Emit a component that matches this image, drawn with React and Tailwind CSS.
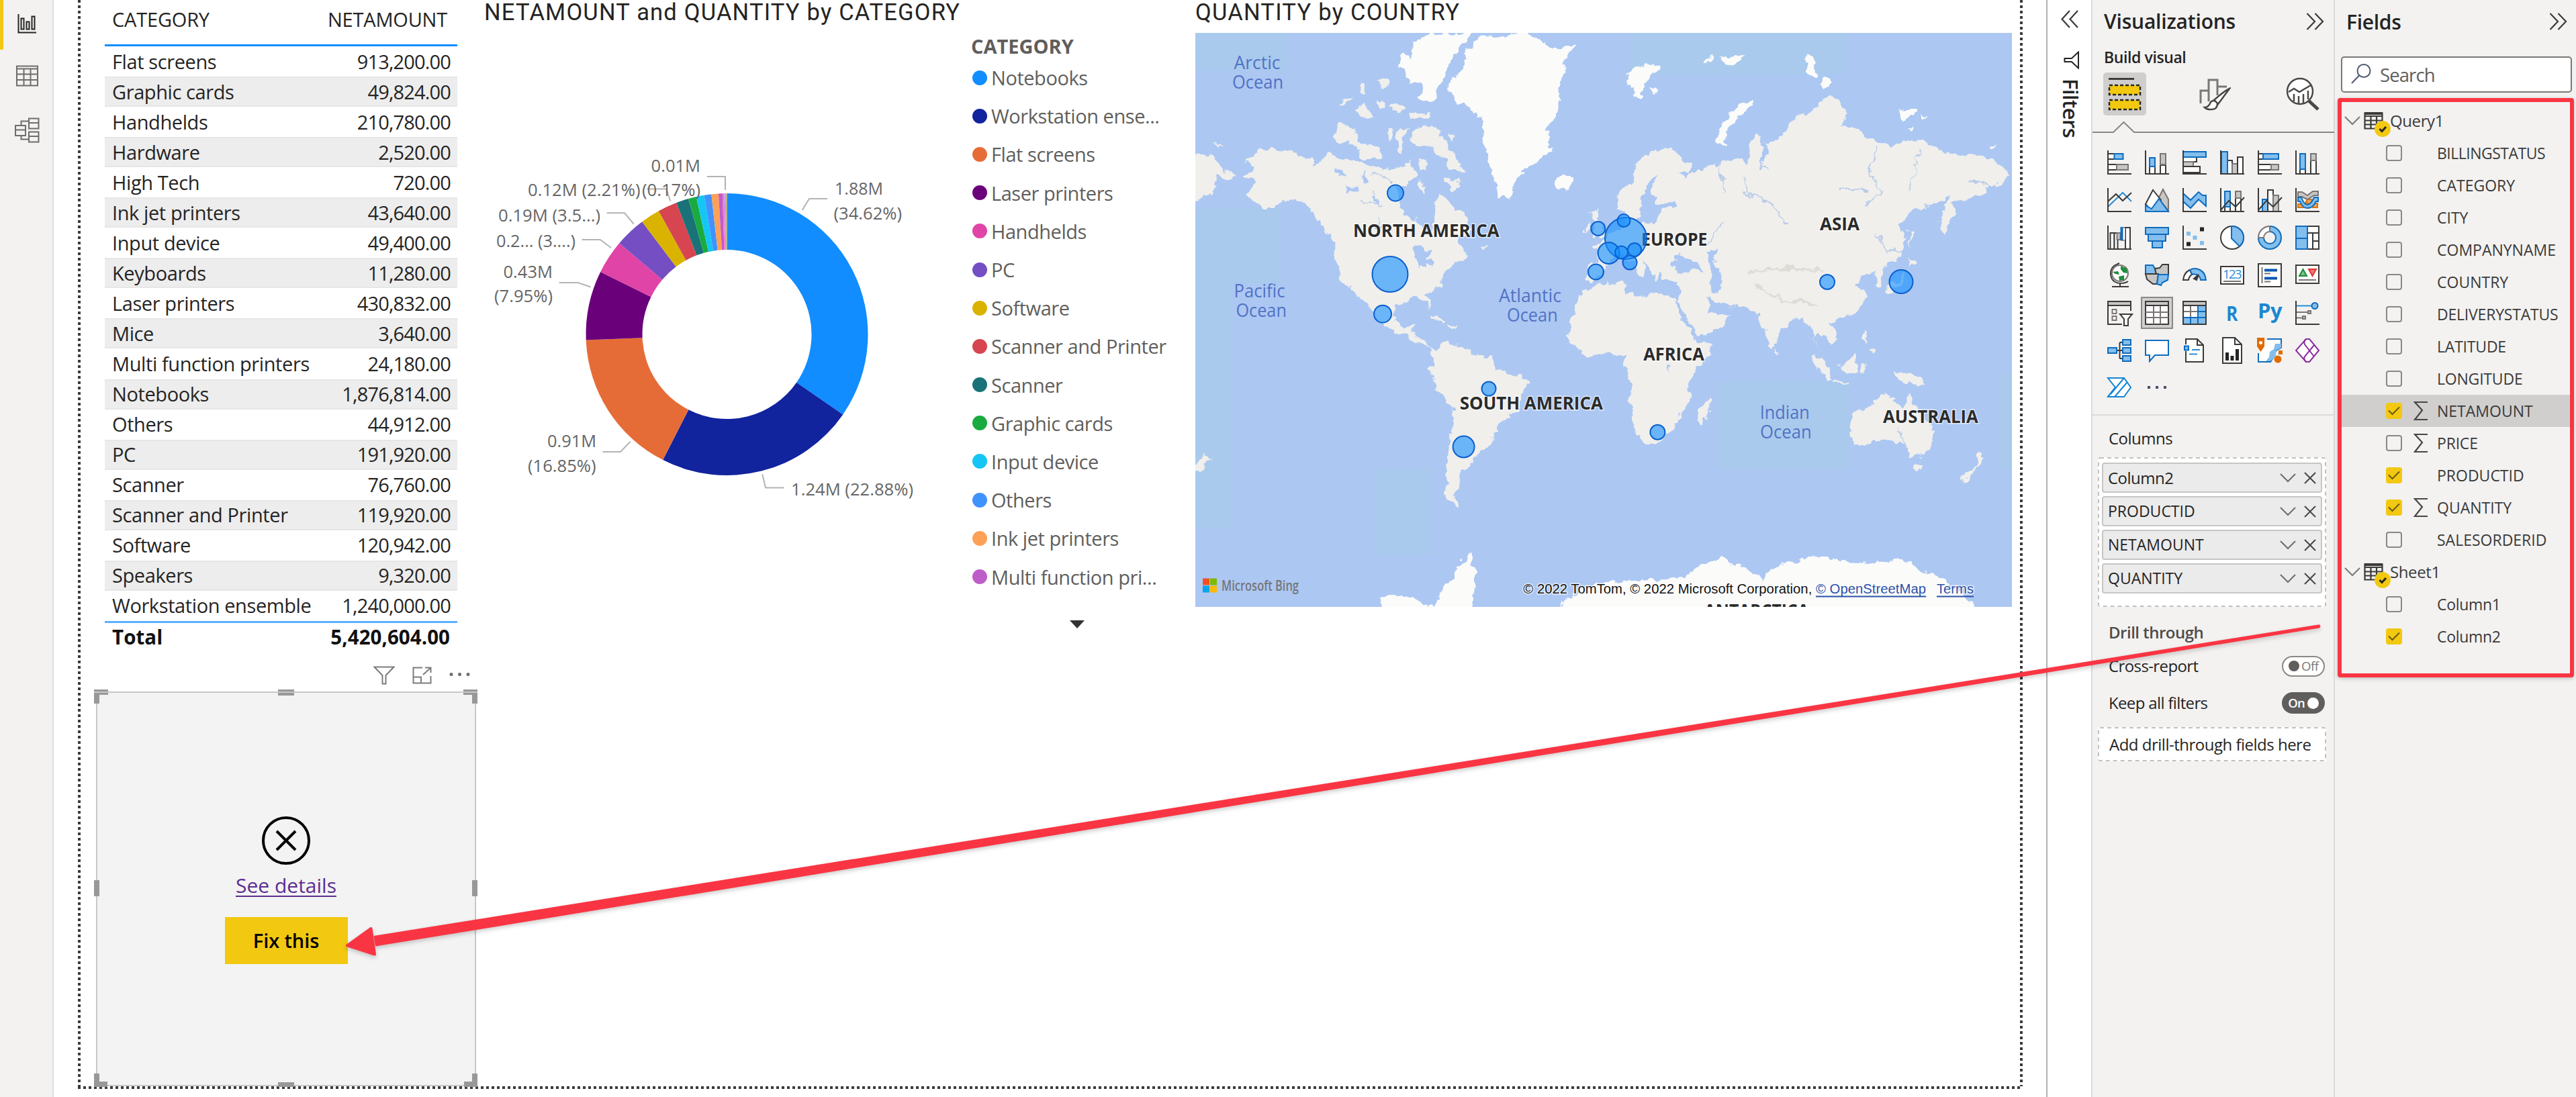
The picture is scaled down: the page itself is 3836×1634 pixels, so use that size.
import React from "react";

const D = "#3b3a39";
const B = "#0f6cbd";
const BF = "#83beec";
const G = "#7a7574";
const GF = "#c8c6c4";

const tableRows = [
  ["Flat screens", "913,200.00"],
  ["Graphic cards", "49,824.00"],
  ["Handhelds", "210,780.00"],
  ["Hardware", "2,520.00"],
  ["High Tech", "720.00"],
  ["Ink jet printers", "43,640.00"],
  ["Input device", "49,400.00"],
  ["Keyboards", "11,280.00"],
  ["Laser printers", "430,832.00"],
  ["Mice", "3,640.00"],
  ["Multi function printers", "24,180.00"],
  ["Notebooks", "1,876,814.00"],
  ["Others", "44,912.00"],
  ["PC", "191,920.00"],
  ["Scanner", "76,760.00"],
  ["Scanner and Printer", "119,920.00"],
  ["Software", "120,942.00"],
  ["Speakers", "9,320.00"],
  ["Workstation ensemble", "1,240,000.00"],
];

/* ---------- left rail ---------- */
function Rail() {
  return (
    <div className="flex w-[80px] shrink-0 flex-col border-r-2 border-[#e1dfdd] bg-[#f3f2f1]">
      <div className="flex h-[74px] items-start border-l-[5px] border-[#f2c811] pt-[20px] pl-[21px]">
        <svg width="29" height="30" viewBox="0 0 29 30" fill="none" stroke="#252423" strokeWidth="2">
          <path d="M1.500 1V28.500H28" />
          <path d="M5.500 7.500h4v16h-4zM13.500 12.500h4v11h-4zM21.500 4.500h4v19h-4z" />
        </svg>
      </div>
      <div className="pt-[23px] pl-[24px]">
        <svg width="33" height="32" viewBox="0 0 33 32" fill="none" stroke="#6f6d6b" strokeWidth="2">
          <path d="M1 1.500H32V30.500H1zM1 5.500H32M1 13.500H32M1 22H32M11.500 5.500V30.500M21.500 5.500V30.500" />
        </svg>
      </div>
      <div className="pt-[46px] pl-[22px]">
        <svg width="37" height="38" viewBox="0 0 37 38" fill="none" stroke="#6f6d6b" strokeWidth="2">
          <path d="M1 12H16V27H1zM1 18.500H16M21 1.500H35.500V16.500H21zM21 8H35.500M21 21.500H35.500V36.500H21zM21 28H35.500M9.500 12V5.500H21M9.500 27V32.500H21" />
        </svg>
      </div>
    </div>
  );
}

const DotsV = () => (
  <div className="w-1 shrink-0 bg-[repeating-linear-gradient(180deg,#3a3a3a_0px,#3a3a3a_4px,transparent_4px,transparent_8px)]" />
);

/* ---------- table visual ---------- */
function TableVisual() {
  return (
    <div className="ml-[36px] w-[525px] text-[29px] tracking-[-0.4px] text-[#252423]">
      <div className="flex h-[69px] items-start justify-between border-b-[3px] border-[#118dff] pt-[8px] pr-[15px] pl-[11px] leading-[42px] tracking-[-0.2px]">
        <span>CATEGORY</span>
        <span>NETAMOUNT</span>
      </div>
      {tableRows.map(([n, v], i) => (
        <div
          key={n}
          className={
            "flex h-[45.06px] items-center justify-between pr-[10px] pl-[11px] leading-[40px] " +
            (i % 2 ? "border-y-2 border-[#e6e6e6] bg-[#ededed]" : "")
          }
        >
          <span>{n}</span>
          <span className="tracking-[-0.85px]">{v}</span>
        </div>
      ))}
      <div className="flex h-[50px] items-center justify-between border-t-[3px] border-[#5ab0ff] pr-[11px] pb-[4px] pl-[11px] text-[29.500px] font-bold tracking-[0.05px] text-[#111]">
        <span>Total</span>
        <span>5,420,604.00</span>
      </div>
    </div>
  );
}

/* ---------- selected broken visual ---------- */
function ErrorVisual() {
  return (
    <div className="ml-[23px] w-[566px]">
      <div className="mt-[17px] flex h-[31px] items-start justify-end gap-[26px] pr-[9px]">
        <svg width="32" height="28" viewBox="0 0 32 28" fill="none" stroke="#7f7d7b" strokeWidth="2">
          <path d="M1.500 1.500H30.500L18.500 14V26.500H13.500V14z" />
        </svg>
        <svg width="29" height="26" viewBox="0 0 29 26" fill="none" stroke="#7f7d7b" strokeWidth="2" className="mt-px">
          <path d="M15 1.500H1.500V24.500H27.500V14M1.500 15.500H13V24.500M19 1.500H27.500V9M16 12L27 2" />
        </svg>
        <svg width="31" height="26" viewBox="0 0 31 26" fill="#6f6d6b">
          <circle cx="3" cy="12.500" r="2.500" />
          <circle cx="15.500" cy="12.500" r="2.500" />
          <circle cx="28" cy="12.500" r="2.500" />
        </svg>
      </div>
      <div className="relative mt-[7px] flex h-[588px] flex-col items-center border-2 border-[#c8c8c8] bg-[#f3f3f3]">
        <svg className="mt-[183px]" width="74" height="74" viewBox="0 0 74 74" fill="none" stroke="#000">
          <circle cx="37" cy="37" r="34" strokeWidth="4" />
          <path d="M23 23L51 51M51 23L23 51" strokeWidth="4" />
        </svg>
        <span className="mt-[9px] text-[30px] leading-[42px] text-[#5c2d91] underline decoration-2 underline-offset-[4px]">
          See details
        </span>
        <div className="mt-[26px] flex h-[70px] w-[183px] items-center justify-center bg-[#f2c811] text-[29px] font-semibold tracking-[-0.1px] text-black">
          Fix this
        </div>
        <svg className="absolute -top-[5px] -left-[5px]" width="572" height="592" viewBox="0 0 572 592" fill="#989898">
          <path d="M0 0H21V8H8V21H0zM571 0H550V8H563V21H571zM0 592V572H8V584H20V592zM571 592V572H563V584H551V592z" />
          <path d="M274 0H298V9H274zM274 585H298V592H274zM0 284H8V308H0zM563 284H571V308H563z" />
          <path d="M0 4H21M274 4H298M550 4H571" stroke="#c6c6c6" strokeWidth="2" />
        </svg>
      </div>
    </div>
  );
}

/* ---------- donut visual ---------- */
const slices = [
  [1876814, "#118DFF"],
  [1240000, "#12239E"],
  [913200, "#E66C37"],
  [430832, "#6B007B"],
  [210780, "#E044A7"],
  [191920, "#744EC2"],
  [120942, "#D9B300"],
  [119920, "#D64550"],
  [76760, "#197278"],
  [49824, "#1AAB40"],
  [49400, "#15C6F4"],
  [44912, "#4092FF"],
  [43640, "#FFA058"],
  [24180, "#BE5DC9"],
  [11280, "#F472D0"],
  [9320, "#B5A1FF"],
  [3640, "#C4A200"],
  [2520, "#FF8080"],
  [720, "#00DBBC"],
];
const sliceTotal = slices.reduce((a, s) => a + s[0], 0);

function Donut() {
  const cx = 362.5;
  const cy = 466;
  const R = 210;
  const r = 126;
  let acc = 0;
  const paths = slices.map(([v, c]) => {
    const a0 = (acc / sliceTotal) * Math.PI * 2;
    acc += v;
    const a1 = (acc / sliceTotal) * Math.PI * 2;
    const p = (a, q) => `${(cx + q * Math.sin(a)).toFixed(2)} ${(cy - q * Math.cos(a)).toFixed(2)}`;
    return (
      <path key={c} fill={c} d={`M${p(a0, R)}A${R} ${R} 0 0 1 ${p(a1, R)}L${p(a1, r)}A${r} ${r} 0 0 0 ${p(a0, r)}Z`} />
    );
  });
  const labels = [
    [523, 258, 72, "1.88M"],
    [521.5, 294.5, 101.5, "(34.62%)"],
    [458, 706, 182, "1.24M (22.88%)"],
    [95, 634, 73, "0.91M"],
    [66, 670.5, 101.5, "(16.85%)"],
    [29.5, 381.5, 73.5, "0.43M"],
    [16, 418, 87, "(7.95%)"],
    [19, 336, 118, "0.2... (3....)"],
    [22, 298, 152, "0.19M (3.5...)"],
    [66, 260, 167.5, "0.12M (2.21%)"],
    [249.6, 223.6, 73.4, "0.01M"],
    [236, 260, 87, "(0.17%)"],
  ];
  return (
    <svg width="700" height="760" viewBox="0 0 700 760" className="shrink-0">
      {paths}
      <path
        fill="none"
        stroke="#b3b3b3"
        strokeWidth="2"
        d="M474.600 281L485 264H512M332.700 231H360V251M243.400 249.500H272.400L278.200 267.500M183.600 285.300H210L223.800 301.700M146.500 325H173.800L189.800 337M112.600 389H140.700L159.500 395.500M177.300 641H204L218.400 626M415.300 674.600L420 694.500H447.400"
      />
      {labels.map(([x, y, w, t]) => (
        <text key={t} x={x} y={y} textLength={w} lengthAdjust="spacingAndGlyphs" fontSize="26" fill="#666">
          {t}
        </text>
      ))}
    </svg>
  );
}

const legend = [
  ["Notebooks", "bg-[#118DFF]"],
  ["Workstation ense...", "bg-[#12239E]"],
  ["Flat screens", "bg-[#E66C37]"],
  ["Laser printers", "bg-[#6B007B]"],
  ["Handhelds", "bg-[#E044A7]"],
  ["PC", "bg-[#744EC2]"],
  ["Software", "bg-[#D9B300]"],
  ["Scanner and Printer", "bg-[#D64550]"],
  ["Scanner", "bg-[#197278]"],
  ["Graphic cards", "bg-[#1AAB40]"],
  ["Input device", "bg-[#15C6F4]"],
  ["Others", "bg-[#4092FF]"],
  ["Ink jet printers", "bg-[#FFA058]"],
  ["Multi function pri...", "bg-[#BE5DC9]"],
];

function DonutVisual() {
  return (
    <div className="flex w-[1060px] shrink-0 flex-col">
      <h2 className="h-[32px] pl-px font-['Roboto'] text-[34.5px] leading-[36px] tracking-[1.2px] whitespace-nowrap text-[#252423]">
        NETAMOUNT and QUANTITY by CATEGORY
      </h2>
      <div className="flex">
        <Donut />
        <div className="flex flex-col pt-[18px] pl-[26px] text-[29px] whitespace-nowrap text-[#605e5c]">
          <div className="h-[37px] leading-[38px] font-bold">CATEGORY</div>
          {legend.map(([n, c]) => (
            <div key={n} className="flex h-[57.2px] items-center gap-[6px] pl-[2px] leading-[57px] tracking-[-0.45px]">
              <span className={"size-[22px] rounded-full " + c} />
              <span>{n}</span>
            </div>
          ))}
          <svg className="mt-[36px] ml-[147px]" width="22" height="12" viewBox="0 0 22 12">
            <path d="M0 0H22L11 12z" fill="#333" />
          </svg>
        </div>
      </div>
    </div>
  );
}

/* ---------- map visual ---------- */
const americas = [
  "M230 410L290 375 370 380 440 395 480 415 530 390 580 405 650 410 690 425 760 430 820 410 845 445 800 470 770 480 785 520 800 545 850 565 880 600 905 590 900 550 915 495 950 500 980 535 1010 530 1030 560 1045 580 1020 600 990 600 1000 625 1035 650 985 665 965 680 940 700 920 730 880 750 893 785 870 760 820 755 770 775 755 800 770 815 800 835 835 820 825 845 865 860 890 885 850 870 800 850 740 840 690 800 660 770 620 740 570 710 555 680 550 620 530 600 490 560 450 520 400 505 350 515 330 530 290 530 265 515 230 500 270 465 225 450 265 425Z",
  "M890 885L915 890 950 870 1010 880 1060 900 1110 910 1125 940 1190 950 1245 970 1220 1005 1205 1045 1150 1070 1120 1110 1090 1135 1070 1150 1040 1160 1030 1185 1000 1200 995 1240 975 1265 1000 1290 975 1285 950 1265 948 1210 960 1130 975 1040 945 1015 915 985 888 945 905 910Z",
  "M40 390L110 395 150 430 195 445 180 460 130 445 110 490 70 500 40 520Z",
  "M545 350L570 310 620 330 640 365 700 370 720 400 650 403 610 365 570 360Z",
  "M825 330L900 318 950 360 1000 420 1025 435 960 425 930 400 880 372 830 370Z",
  "M565 268L600 242 620 248 590 268ZM610 275L660 262 690 298 640 300ZM640 215L665 212 660 238 640 235ZM700 200L745 205 735 222 712 218ZM735 325L755 320 760 350 740 355ZM768 330L810 318 800 345 790 395 770 385 775 355ZM815 285L895 285 890 300 820 305ZM700 250L730 262 728 282 705 270ZM740 265L800 268 770 292ZM945 450L990 455 998 480 960 480ZM850 398L880 410 878 430 855 430ZM850 460L878 470 860 500 845 480ZM955 338L985 345 970 355Z",
  "M900 800L940 812 935 818 895 806ZM950 822L990 825 985 830 950 828ZM1065 622L1095 622 1080 632ZM110 365L145 366 125 373Z",
  "M1465 580L1440 600 1445 580 1465 570ZM1470 540L1490 532 1500 560 1530 600 1480 605 1485 575Z",
  "M40 1190L80 1155 105 1160 70 1190 50 1215Z",
];
const snowWest = [
  "M955 215L1010 180 1030 120 1080 90 1160 95 1210 82 1290 100 1340 125 1420 110 1380 150 1360 200 1350 280 1310 340 1335 380 1260 420 1200 450 1180 500 1140 500 1120 440 1090 370 1080 310 1040 270 985 265Z",
  "M830 110L900 83 1045 83 980 140 930 200 900 260 850 250 870 215 820 210 780 170 790 135 825 150Z",
  "M1340 465L1370 445 1405 455 1385 478 1355 480Z",
  "M715 1525L740 1510 860 1525 900 1540 940 1490 990 1440 1040 1400 1050 1460 1045 1550 715 1550Z",
];
const eurasia = [
  "M-103 830L-85 790 -54 740 5 722 95 715 100 745 170 755 180 740 270 755 290 790 320 830 345 865 405 870 385 905 340 945 320 970 325 1020 290 1045 280 1075 240 1110 200 1130 165 1130 140 1095 125 1050 108 1025 122 975 95 935 90 905 44 895 -44 905 -74 890 -108 855Z",
  "M60 500L80 480 120 470 140 410 190 385 250 378 330 420 320 440 280 438 300 455 350 430 410 420 480 400 530 420 538 360 565 338 575 370 575 420 600 400 590 362 640 350 690 300 760 280 800 255 820 240 880 285 860 320 920 330 990 360 1040 375 1100 350 1190 370 1240 390 1300 395 1390 400 1440 430 1460 445 1430 460 1380 470 1380 490 1300 510 1255 510 1260 540 1230 590 1215 600 1205 560 1230 530 1240 500 1190 520 1120 530 1060 570 1090 600 1070 650 1010 680 1000 730 980 725 975 690 930 700 915 720 945 750 920 790 860 810 820 820 850 855 830 875 780 845 765 855 790 900 755 840 720 800 680 810 640 850 615 885 600 860 570 800 520 780 440 770 400 760 378 750 400 792 470 800 430 835 350 858 320 810 280 765 290 740 285 715 230 708 215 690 205 712 170 670 155 655 165 690 150 700 120 665 100 652 60 650 30 668 0 700 -20 715 -50 710 -45 670 0 665 -5 640 -20 630 20 610 50 590 90 580 100 545 85 535 65 530Z",
  "M355 1040L395 1005 400 1020 375 1075 355 1070Z",
  "M890 1080L900 1050 960 1030 1000 1005 1050 1005 1045 1020 1080 1035 1100 1000 1115 1020 1150 1050 1185 1095 1180 1130 1145 1160 1100 1155 1080 1125 1040 1115 980 1120 905 1135 900 1110Z",
  "M1120 1178L1148 1180 1135 1195ZM1350 1150L1370 1160 1320 1200 1300 1222 1290 1210 1335 1180Z",
  "M755 900L795 905 825 960 805 958 770 925ZM850 930L915 900 912 940 885 950 855 940ZM830 965L880 970 878 976 832 971ZM930 925L950 928 940 950 925 945ZM1040 945L1100 945 1140 965 1158 985 1100 972 1080 965ZM935 835L948 838 950 868 938 860ZM955 880L985 885 972 895ZM1098 585L1112 590 1105 630ZM1095 655L1130 665 1102 680ZM1080 690L1080 720 1020 742 1015 732 1065 715ZM980 700L1000 712 990 730ZM628 880L640 890 632 898Z",
];
const snowEast = [
  "M100 190L160 165 220 165 218 182 180 195 160 215 150 252 130 245 110 210ZM180 225L205 230 195 240ZM440 148L480 140 515 138 500 155 450 160ZM375 155L400 145 395 160ZM725 150L735 135 760 140 765 165 780 185 770 200 740 180ZM780 212L800 195 820 210 800 225Z",
  "M420 365L435 315 480 275 540 253 545 265 485 298 455 340 447 375Z",
  "M1065 278L1115 280 1112 298 1070 298ZM1140 288L1168 295 1150 300ZM1095 322L1112 325 1102 332ZM1380 368L1408 366 1395 374Z",
  "M-145 1550L-95 1510 0 1480 90 1475 250 1470 300 1465 350 1440 430 1415 470 1430 540 1445 580 1470 640 1435 700 1425 760 1410 860 1420 960 1430 1040 1418 1100 1430 1150 1450 1220 1470 1290 1505 1335 1550Z",
];

const bubbles = [
  [2078, 287.5, 12],
  [2070, 408.5, 26.5],
  [2059, 467.7, 13],
  [2217, 579, 10.5],
  [2179.6, 665.5, 16],
  [2379.8, 340.4, 10.5],
  [2421, 355, 31],
  [2395.6, 377, 16],
  [2376.5, 405, 11.5],
  [2418, 328.6, 9.5],
  [2414.5, 376, 9.5],
  [2434, 372, 10],
  [2427, 391, 10.5],
  [2721, 420, 11],
  [2831, 419.6, 17.5],
  [2468.4, 643.8, 11],
];
const continents = [
  [2015, 352.7, 217.6, "NORTH AMERICA"],
  [2444, 365.6, 98.5, "EUROPE"],
  [2710, 343.3, 59, "ASIA"],
  [2447.3, 537, 90.5, "AFRICA"],
  [2173.8, 609.7, 213, "SOUTH AMERICA"],
  [2803.9, 629.7, 142, "AUSTRALIA"],
  [2537.8, 919, 156, "ANTARCTICA"],
];
const oceans = [
  [1837.5, 102.7, 69, "Arctic"],
  [1835, 132, 76, "Ocean"],
  [1837.5, 443, 76, "Pacific"],
  [1840.4, 472.4, 75.5, "Ocean"],
  [2232, 450, 93, "Atlantic"],
  [2244, 479, 75.7, "Ocean"],
  [2620.8, 623.8, 74, "Indian"],
  [2621, 653, 76.8, "Ocean"],
];

function MapVisual() {
  return (
    <div className="flex w-[1216px] shrink-0 flex-col">
      <h2 className="h-[49px] font-['Roboto'] text-[34.5px] leading-[36px] tracking-[1.25px] whitespace-nowrap text-[#252423]">
        QUANTITY by COUNTRY
      </h2>
      <svg width="1216" height="855" viewBox="1780 49 1216 855" className="overflow-hidden">
        <defs>
          <filter id="coast" x="-2%" y="-2%" width="104%" height="104%">
            <feTurbulence type="fractalNoise" baseFrequency="0.07" numOctaves="3" seed="4" />
            <feDisplacementMap in="SourceGraphic" scale="16" xChannelSelector="R" yChannelSelector="G" />
          </filter>
        </defs>
        <rect x="1780" y="49" width="1216" height="855" fill="#acc7f2" />
        <g fill="#a9caec">
          <path d="M1780 311H1907V422H1835V786H1780zM2047 698H2131V826H2047zM1780 49H1918V105H1780zM2426 49H2750V111H2426zM2557 569H2755V698H2557zM2978 557H2996V698H2978z" />
        </g>
        <g filter="url(#coast)">
          <g transform="translate(1760 0) scale(0.4146 0.5869)">
            <g fill="#f0efec">
              {americas.map((d) => (
                <path key={d} d={d} />
              ))}
            </g>
            <g fill="#fbfbfa">
              {snowWest.map((d) => (
                <path key={d} d={d} />
              ))}
            </g>
            <g fill="#acc7f2">
              <path d="M830 635L860 625 900 640 880 655 905 665 900 678 860 670 845 680ZM790 500L815 485 850 470 880 500 905 510 880 560 850 560 800 540Z" />
              <path d="M545 430L600 440 570 455ZM585 470L640 478 600 490ZM655 430L672 470 650 465ZM690 480L705 520 690 510ZM700 545L712 575 702 578Z" />
            </g>
            <path d="M640 510L720 520M680 440L760 465M1450 865L1500 840" stroke="#b9cbe8" strokeWidth="4" fill="none" />
          </g>
          <g transform="translate(2380 0) scale(0.4209 0.5869)">
            <g fill="#f0efec">
              {eurasia.map((d) => (
                <path key={d} d={d} />
              ))}
            </g>
            <g fill="#fbfbfa">
              {snowEast.map((d) => (
                <path key={d} d={d} />
              ))}
            </g>
            <g fill="#acc7f2">
              <path d="M140 560L150 520 165 480 190 448 208 450 188 490 205 518 270 512 275 525 215 538 200 560 170 575Z" />
              <path d="M262 672L285 645 300 655 345 660 380 688 330 684 270 690ZM385 640L425 630 408 665 435 700 428 748 400 740 402 690Z" />
              <path d="M240 925L262 930 255 945ZM270 765L290 770 345 865 335 860Z" />
            </g>
            <path
              d="M515 450L525 490 620 520 665 570M980 370L960 440 1010 490 940 520M850 480L960 480M1140 380L1100 490M575 420L610 425M425 420L450 490M980 590L1020 635 1080 640M440 560L390 620M1310 460L1380 465M1060 1090L1085 1140"
              stroke="#b9cbe8"
              strokeWidth="4"
              fill="none"
            />
            <path d="M530 690L700 680 800 690M550 720L640 760 780 775" stroke="#dedcd6" strokeWidth="6" fill="none" />
          </g>
        </g>
        {continents.map(([x, y, w, t]) => (
          <text
            key={t}
            x={x}
            y={y}
            textLength={w}
            lengthAdjust="spacingAndGlyphs"
            fontSize="27"
            fontWeight="700"
            fill="#2b2b2b"
            stroke="#fff"
            strokeOpacity="0.6"
            strokeWidth="3"
            paintOrder="stroke"
          >
            {t}
          </text>
        ))}
        {oceans.map(([x, y, w, t]) => (
          <text key={t + x} x={x} y={y} textLength={w} lengthAdjust="spacingAndGlyphs" fontSize="27" fill="#5272c6">
            {t}
          </text>
        ))}
        <g fill="#118dff" fillOpacity="0.6" stroke="#0a60cf" strokeWidth="2">
          {bubbles.map(([x, y, r]) => (
            <circle key={x} cx={x} cy={y} r={r} />
          ))}
        </g>
        <path fill="#f25022" d="M1791 861.500h10v10h-10z" />
        <path fill="#7fba00" d="M1802 861.500h10v10h-10z" />
        <path fill="#00a4ef" d="M1791 872.500h10v10h-10z" />
        <path fill="#ffb900" d="M1802 872.500h10v10h-10z" />
        <text x="1819" y="879.700" textLength="115" lengthAdjust="spacingAndGlyphs" fontSize="21" fontWeight="600" fill="#75777c">
          Microsoft Bing
        </text>
        <g fontFamily="Liberation Sans" fontSize="20" stroke="#fff" strokeOpacity="0.7" strokeWidth="3" paintOrder="stroke">
          <text x="2268.300" y="884.400" textLength="430" lengthAdjust="spacingAndGlyphs" fill="#111">
            © 2022 TomTom, © 2022 Microsoft Corporation,
          </text>
          <text x="2704" y="884.400" textLength="164" lengthAdjust="spacingAndGlyphs" fill="#2a52a8">
            © OpenStreetMap
          </text>
          <text x="2884" y="884.400" textLength="55" lengthAdjust="spacingAndGlyphs" fill="#2a52a8">
            Terms
          </text>
        </g>
        <path d="M2704 888.500H2868M2884 888.500H2939" stroke="#2a52a8" strokeWidth="2" />
      </svg>
    </div>
  );
}

/* ---------- filters strip ---------- */
function FiltersStrip() {
  return (
    <div className="flex w-[67px] shrink-0 flex-col items-center border-l-2 border-[#b3b0ad] bg-white pl-px">
      <svg className="mt-[15px]" width="26" height="27" viewBox="0 0 26 27" fill="none" stroke="#3b3a39" strokeWidth="2.200">
        <path d="M13 1L1.500 13.500 13 26M25 1L13.500 13.500 25 26" />
      </svg>
      <svg className="mt-[34px] ml-[6px]" width="24" height="27" viewBox="0 0 24 27" fill="none" stroke="#252423" strokeWidth="2">
        <path d="M22 1.500V25.500L12 16H1.500V11H12z" />
      </svg>
      <div className="mt-[14px] h-[90px] pl-[3px] text-[31px] leading-[32px] font-semibold tracking-[-0.6px] text-[#252423] [writing-mode:vertical-rl]">
        Filters
      </div>
    </div>
  );
}

/* ---------- visual gallery icons (36 x 36) ---------- */
const Axis = () => <path d="M1 0V35H36" stroke={D} fill="none" />;
const Rc = ({ x, y, w, h, k }) => (
  <rect
    x={x}
    y={y}
    width={w}
    height={h}
    fill={k === "b" ? BF : k === "g" ? GF : "#fff"}
    stroke={k === "b" ? B : k === "g" ? G : D}
  />
);
const gallery = [
  <><Rc x={1} y={5} w={10} h={8} /><Rc x={10.5} y={5} w={13} h={8} k="b" /><Rc x={1} y={21} w={14} h={8} /><Rc x={14} y={21} w={17} h={8} k="g" /><Axis /></>,
  <><Rc x={7} y={24} w={8} h={11} /><Rc x={7} y={11} w={8} h={13} k="b" /><Rc x={23} y={22} w={8} h={13} /><Rc x={23} y={5} w={8} h={16} k="g" /><Axis /></>,
  <><Rc x={1} y={10} w={20} h={7} /><Rc x={1} y={17} w={15} h={7} k="g" /><Rc x={1} y={24} w={25} h={9} /><Rc x={1} y={2} w={34} h={8} k="b" /><Axis /></>,
  <><Rc x={11} y={15} w={7} h={20} /><Rc x={18} y={20} w={8} h={15} k="g" /><Rc x={26} y={10} w={8} h={25} /><Rc x={2} y={2} w={9} h={33} k="b" /><Axis /></>,
  <><Rc x={1} y={5} w={8} h={8} /><Rc x={8} y={5} w={23} h={8} k="b" /><Rc x={1} y={21} w={20} h={8} /><Rc x={20} y={21} w={11} h={8} k="g" /><Axis /></>,
  <><Rc x={7} y={28} w={8} h={7} /><Rc x={7} y={5} w={8} h={23} k="b" /><Rc x={23} y={15} w={8} h={20} /><Rc x={23} y={5} w={8} h={10} k="g" /><Axis /></>,

  <><path d="M1 28L23 7 36 20" stroke="#2a8dd4" fill="none" /><path d="M1 20L13 9 23 19 36 7" stroke={D} fill="none" /><Axis /></>,
  <><path d="M19 18L27 2 35 17V34L22 18z" fill={GF} stroke={G} /><path d="M1 24L12 3 24 18 10 34z" fill="#fff" stroke={D} /><path d="M1 26L10 31 21 16 35 35H1z" fill={BF} stroke={B} /></>,
  <><path d="M1 8L12 18 24 6 30 11H35V27L24 17 12 30 1 20z" fill={BF} stroke={B} /><Axis /></>,
  <><Rc x={7} y={28} w={8} h={7} /><Rc x={7} y={5} w={8} h={23} k="b" /><Rc x={23} y={15} w={8} h={20} /><Rc x={23} y={5} w={8} h={10} k="g" /><path d="M1 33L13 19 23 28 36 14" stroke={D} fill="none" /><Axis /></>,
  <><Rc x={7} y={17} w={8} h={18} k="b" /><Rc x={15} y={3} w={8} h={32} /><Rc x={23} y={11} w={8} h={24} k="g" /><path d="M1 33L13 19 23 28 36 14" stroke={D} fill="none" /><Axis /></>,
  <><path d="M4 24H14L18 17H24L28 23H33V29H26L18 22 12 29H4z" fill="#f2a65a" stroke="#d9730d" /><path d="M4 6H10L18 11 26 5H34V11H28L18 17 10 13H4z" fill={GF} stroke={G} /><path d="M4 14H9Q13 25 18 25 23 25 28 14H34V20H31Q26 30 18 30 11 30 7 20H4z" fill={BF} stroke={B} /><Axis /></>,

  <><Rc x={4.5} y={11} w={6} h={24} /><Rc x={10.5} y={11} w={5} h={24} /><rect x="14.500" y="11" width="5" height="10" fill={GF} stroke={G} /><Rc x={27} y={3} w={7} h={32} /><path d="M22 3H27V22H20z" fill="#fff" stroke={D} strokeWidth="1" /><path d="M21.500 2V22" stroke={B} strokeWidth="4" /><Axis /></>,
  <><Rc x={1} y={3} w={34} h={10} k="b" /><Rc x={5} y={13} w={26} h={10} k="b" /><Rc x={11} y={23} w={15} h={10} k="b" /></>,
  <><g stroke="none"><path d="M26 2.500h6v6h-6zM6 24.500h6v6h-6z" fill="#252423" /><path d="M6 9h6v6h-6zM15.500 15h6v6h-6zM26 23h6v6h-6z" fill={BF} /></g><Axis /></>,
  <><circle cx="18" cy="18" r="17" fill="#fff" stroke={D} /><path d="M17 1A17 17 0 0 1 29 31L17 19z" fill={BF} stroke={B} /></>,
  <><path d="M18 1A17 17 0 1 1 1 18H9A9 9 0 1 0 18 9z" fill={BF} stroke={B} /><path d="M1 18A17 17 0 0 1 18 1V9A9 9 0 0 0 9 18z" fill="#fff" stroke={G} /></>,
  <><Rc x={1} y={1} w={34} h={34} /><path d="M18 11H35M26 11V35M26 23H35" stroke={D} fill="none" /><Rc x={1} y={1} w={17} h={18} k="b" /><Rc x={1} y={19} w={17} h={16} k="b" /></>,

  <><path d="M14 2Q5 5 5 16 6 29 19 30 27 30 31 27M19 30V35M7 35H32M14 2L18 0" stroke={D} fill="none" /><circle cx="19" cy="15" r="12" fill="#fff" stroke={G} /><path d="M20 4L29 8 30 15 24 14 20 9zM8 13L16 12 18 17 12 16zM17 20L25 18 25 25 18 26z" fill="#1f8b3b" stroke="none" /></>,
  <><path d="M1 3H12L15 8 17 16H1z" fill={BF} stroke={B} /><path d="M15 8L22 7 26 2H35V17H17z" fill={GF} stroke={D} /><path d="M1 16H20L18 31 12 31 3 24z" fill={GF} stroke={D} /><path d="M20 17H35L34 25 26 29 24 33 18 31z" fill={BF} stroke={B} /></>,
  <><path d="M1 25Q2 14 11 10L14 17Q10 19 9 25z" fill="#fff" stroke={D} /><path d="M11 10Q18 6 26 10 34 14 35 25H27Q26 19 21 17L14 16z" fill={BF} stroke={B} /><path d="M17 23L24 17 21 25z" fill={D} stroke={D} /></>,
  <><Rc x={1} y={5} w={34} h={26} /><text x="4" y="23" fontSize="19" textLength="28" stroke="none" fill="#2a8dd4">123</text><path d="M5 27H31" stroke={G} /></>,
  <><Rc x={1} y={1} w={34} h={34} /><path d="M6.500 6V30" stroke={G} /><path d="M10 10.500H29M10 22.500H29" stroke="#0b57ad" strokeWidth="4" /><path d="M10 15.500H19M10 27.500H19" stroke={G} /></>,
  <><Rc x={1} y={3} w={34} h={27} /><path d="M6 19L11.500 9 17 19z" fill="#7cc18a" stroke="#1f8b3b" /><path d="M20 9H31L25.500 19z" fill="#f17b7b" stroke="#e03131" /><path d="M5 25H31" stroke={G} /></>,

  <><path d="M1 7V1H35V15M1 1V35H22" stroke={D} fill="none" /><path d="M1 1H35V7H1z" fill={GF} stroke={D} /><path d="M7.500 13h6v6h-6zM7.500 23h6v6h-6z" fill="#fff" stroke={G} /><path d="M19 20H37L31 27V37H25V27z" fill="#fff" stroke={D} /></>,
  <><Rc x={1} y={1} w={34} h={34} /><path d="M13 7V35M23 7V35M1 17H35M1 25H35" stroke={G} /><path d="M1 1H35V7H1z" fill={GF} stroke={D} /></>,
  <><Rc x={1} y={1} w={34} h={34} /><path d="M23 7H35V35H1V25H23z" fill={BF} stroke="none" /><path d="M12 7V25M1 16H23" stroke={G} /><path d="M23 7V35M12 25V35M1 25H35M23 16H35" stroke={B} /><path d="M1 1H35V7H1z" fill={GF} stroke={D} /><path d="M1 1H35V35H1z" fill="none" stroke={D} /></>,
  <text x="9" y="29.500" fontSize="30" fontWeight="700" textLength="17" lengthAdjust="spacingAndGlyphs" fill="#1b87d1" stroke="none">R</text>,
  <text x="0" y="26" fontSize="30" fontWeight="700" textLength="36" lengthAdjust="spacingAndGlyphs" fill="#1b87d1" stroke="none">Py</text>,
  <><Axis /><path d="M2 7.500H25" stroke="#2a8dd4" /><path d="M2 17H19M2 25.500H11" stroke={G} /><circle cx="29" cy="7.500" r="4.500" fill={BF} stroke={B} /><path d="M19 15h4v4h-4zM11 23h4v4h-4z" fill={GF} stroke={G} /></>,

  <><path d="M14 18H23M18.500 6V30M18.500 6H23M18.500 30H23" stroke={D} fill="none" /><Rc x={1} y={14} w={13} h={8} k="b" /><Rc x={23} y={2} w={12} h={8} k="b" /><Rc x={23} y={14} w={12} h={8} k="b" /><Rc x={23} y={26} w={12} h={8} k="b" /></>,
  <path d="M1 3H35V25H15L7 34V25H1z" fill="#fff" stroke={B} />,
  <><path d="M5 9V1H22L31 10V35H5V19" fill="#fff" stroke={D} /><path d="M22 1V10H31" fill="none" stroke={D} /><rect x="3" y="11.500" width="6" height="6" fill={BF} stroke={B} /><path d="M14 17H26M10 23.500H22" stroke="#2a8dd4" /></>,
  <><path d="M4 -1H22L32 9V37H4z" fill="#fff" stroke={D} /><path d="M22 -1V9H32" fill="none" stroke={D} /><path d="M10.500 21V33M18 26V33M25.500 16V33" stroke="#252423" strokeWidth="5" /></>,
  <><path d="M14 1H35V14L27 18 24 27 19 35H1V22" fill="#fff" stroke={B} /><path d="M35 8H26L24 16 18 20 17 28 12 34H19L27 26 27 18 35 14z" fill={BF} stroke="none" /><path d="M-1 -1H10V12L4.500 20 -1 12z" fill="#e06c00" stroke="none" /><circle cx="4.500" cy="6.500" r="2.500" fill="#fff" stroke="none" /><circle cx="30" cy="31" r="5.500" fill="#e06c00" stroke="none" /><path d="M31 18h6v6h-6z" fill="#e06c00" stroke="none" /></>,
  <><path d="M16 1L1 18 16 35H21L35 18 21 1z" fill="#fff" stroke="#8b2c9e" /><path d="M16 1Q12 5 14 9L28 27M16 35Q12 31 14 27L28 10" fill="none" stroke="#8b2c9e" /></>,

  <><path d="M1 3H25L35 17 25 31H1L12 17z" fill="#fff" stroke="#1484d8" /><path d="M12 17L1 31M25 3L5 27M30 9L11 31" fill="none" stroke="#1484d8" /></>,
  <path d="M4 15h4v4h-4zM16 15h4v4h-4zM28 15h4v4h-4z" fill="#494f6b" stroke="none" />,
];

function Toggle({ on }) {
  return on ? (
    <div className="flex h-[32px] w-[64px] items-center justify-end gap-[4px] rounded-full bg-[#605e5c] pr-[9px] text-[18.5px] leading-none font-semibold tracking-[-0.8px] text-white">
      <span>On</span>
      <span className="size-[17px] rounded-full bg-white" />
    </div>
  ) : (
    <div className="flex h-[31px] w-[64px] items-center gap-[3px] rounded-full border-2 border-[#8a8886] bg-white pl-[8px] text-[18.5px] leading-none tracking-[-0.4px] text-[#7a7876]">
      <span className="size-[16px] rounded-full bg-[#605e5c]" />
      <span>Off</span>
    </div>
  );
}

const Dashed = ({ h }) => (
  <svg className="absolute inset-0" width="340" height={h} fill="none">
    <rect x="1" y="1" width="338" height={h - 2} rx="2" stroke="#c3c1bf" strokeWidth="2" strokeDasharray="6 5" />
  </svg>
);

const ChevRight = () => (
  <svg width="27" height="26" viewBox="0 0 27 26" fill="none" stroke="#3b3a39" strokeWidth="2.200">
    <path d="M1.500 1L13 13 1.500 25M13.500 1L25 13 13.500 25" />
  </svg>
);

function VisualizationsPane() {
  return (
    <div className="flex w-[363px] shrink-0 flex-col border-r-2 border-l-2 border-[#dddbd9] bg-[#f3f2f1] text-[24px] tracking-[-0.5px] text-[#252423]">
      <div className="flex h-[64px] items-center justify-between pr-[14px] pl-[17px]">
        <span className="text-[30px] leading-[64px] font-semibold tracking-[-0.2px]">Visualizations</span>
        <ChevRight />
      </div>
      <div className="h-[44px] pl-[17px] text-[23px] leading-[43px] font-semibold tracking-[-0.4px]">Build visual</div>
      <div className="flex h-[64px] items-center pl-[16px]">
        <div className="flex h-[64px] w-[64px] items-center justify-center rounded-[5px] bg-[#d0cecc]">
          <svg width="50" height="50" viewBox="0 0 50 50">
            <path d="M1 2.500H39" stroke="#252423" strokeWidth="2.500" />
            <path d="M2 12H48V26H2zM2 34H48V48H2z" fill="#f2c811" stroke="#252423" strokeWidth="2.500" strokeDasharray="5 3" />
          </svg>
        </div>
        <svg className="mt-[2px] ml-[79px]" width="47" height="48" viewBox="0 0 47 48" fill="none" stroke="#4a4846" strokeWidth="2.500">
          <path d="M2 37V18H14M14 34V2H27V25M27 12H41" stroke="#7a7876" strokeWidth="3" />
          <path d="M45 15L28 38 22 32Q38 18 45 15z" fill="#fff" />
          <path d="M8 43Q14 43 17 35 22 30 27 37 27 47 16 46 11 46 8 43z" fill="#fff" />
        </svg>
        <svg className="ml-[82px]" width="50" height="50" viewBox="0 0 50 50" fill="none" stroke="#4a4846" strokeWidth="2.500">
          <circle cx="21" cy="21" r="19" fill="#fff" />
          <path d="M4 22L12 17 20 22 37 12M12 25V36M19 28V39M26 25V39M33 20V33" />
          <path d="M34 35L48 48" strokeWidth="5" />
        </svg>
      </div>
      <svg className="mt-[8px] shrink-0" width="360" height="20" viewBox="0 0 360 20" fill="none" stroke="#8a8886" strokeWidth="2">
        <path d="M0 17H31L46.500 2 62 17H360" />
      </svg>
      <div className="grid h-[419px] grid-cols-[repeat(6,56px)] grid-rows-[repeat(7,56px)] border-b-2 border-[#dddbd9] pt-[24px] pl-[22px]">
        {gallery.map((g, i) => (
          <div key={i} className="relative size-[36px]">
            {i === 25 && <div className="absolute -inset-[6px] border-2 border-[#8a8886] bg-[#d2d0ce]" />}
            <svg className="relative overflow-visible" width="36" height="36" viewBox="0 0 36 36" strokeWidth="2">
              {g}
            </svg>
          </div>
        ))}
      </div>
      <div className="h-[62px] pl-[24px] leading-[67px]">Columns</div>
      <div className="relative ml-[8px] h-[223px] w-[340px] bg-white px-[6px] pt-[8px]">
        <Dashed h={223} />
        {["Column2", "PRODUCTID", "NETAMOUNT", "QUANTITY"].map((t, i) => (
          <div
            key={t}
            className={
              "relative mb-[5px] flex h-[45px] items-center rounded-[4px] border-2 border-[#c8c6c4] bg-[#ebebeb] pl-[7px] " +
              (i ? "text-[23px] tracking-[0px]" : "")
            }
          >
            <span className="flex-1">{t}</span>
            <svg width="24" height="14" viewBox="0 0 24 14" fill="none" stroke="#6f6d6b" strokeWidth="2" className="mr-[12px]">
              <path d="M1 1L12 12 23 1" />
            </svg>
            <svg width="18" height="18" viewBox="0 0 18 18" fill="none" stroke="#484644" strokeWidth="2" className="mr-[7px]">
              <path d="M1 1L17 17M17 1L1 17" />
            </svg>
          </div>
        ))}
      </div>
      <div className="mt-[18px] h-[40px] pl-[24px] leading-[40px] font-semibold tracking-[-0.5px] text-[#4e4c4a]">Drill through</div>
      <div className="mt-[9px] flex h-[42px] items-center justify-between pr-[13px] pl-[24px]">
        <span className="tracking-[-0.6px]">Cross-report</span>
        <Toggle />
      </div>
      <div className="mt-[13px] flex h-[42px] items-center justify-between pr-[13px] pl-[24px]">
        <span className="tracking-[-0.65px]">Keep all filters</span>
        <Toggle on />
      </div>
      <div className="relative mt-[15px] ml-[8px] flex h-[51px] w-[340px] items-center bg-white pl-[17px] whitespace-nowrap">
        <Dashed h={51} />
        <span>Add drill-through fields here</span>
      </div>
    </div>
  );
}

/* ---------- fields pane ---------- */
const fields = [
  ["BILLINGSTATUS", 0, 0, "tracking-[-0.5px]"],
  ["CATEGORY", 0, 0, "tracking-[0px]"],
  ["CITY", 0, 0, "tracking-[0px]"],
  ["COMPANYNAME", 0, 0, "tracking-[0px]"],
  ["COUNTRY", 0, 0, "tracking-[0px]"],
  ["DELIVERYSTATUS", 0, 0, "tracking-[-0.2px]"],
  ["LATITUDE", 0, 0, "tracking-[-0.2px]"],
  ["LONGITUDE", 0, 0, "tracking-[-0.2px]"],
  ["NETAMOUNT", 1, 1, "tracking-[0px]"],
  ["PRICE", 0, 1, "tracking-[-0.2px]"],
  ["PRODUCTID", 1, 0, "tracking-[0px]"],
  ["QUANTITY", 1, 1, "tracking-[0px]"],
  ["SALESORDERID", 0, 0, "tracking-[0px]"],
];
const sheet = [
  ["Column1", 0, 0, "tracking-[-0.3px]"],
  ["Column2", 1, 0, "tracking-[-0.3px]"],
];

function FieldRow({ f: [name, checked, sum, cls] }) {
  return (
    <div className={"flex h-[48px] items-center pl-[66px] text-[23px] " + (name === "NETAMOUNT" ? "bg-[#d0cfce]" : "")}>
      {checked ? (
        <span className="flex size-[24px] items-center justify-center rounded-[4px] bg-[#f2c811]">
          <svg width="18" height="14" viewBox="0 0 18 14" fill="none" stroke="#6b5a12" strokeWidth="2">
            <path d="M1 6.500L6.500 12 17 1.500" />
          </svg>
        </span>
      ) : (
        <span className="size-[24px] rounded-[4px] border-2 border-[#8a8886]" />
      )}
      <span className="flex w-[52px] pl-[17px]">
        {sum ? (
          <svg width="22" height="30" viewBox="0 0 22 30" fill="none" stroke="#484644" strokeWidth="2.200">
            <path d="M21 2H2L13 14 2 28H21" />
          </svg>
        ) : null}
      </span>
      <span className={cls}>{name}</span>
    </div>
  );
}

function TableNode({ name }) {
  return (
    <div className="flex h-[48px] items-center pl-[4px] text-[24px] tracking-[-0.4px]">
      <svg width="24" height="14" viewBox="0 0 24 14" fill="none" stroke="#7a7876" strokeWidth="2">
        <path d="M1 1L12 12 23 1" />
      </svg>
      <svg className="mt-[10px] ml-[5px] overflow-visible" width="39" height="38" viewBox="0 0 39 38" fill="none">
        <path d="M1.500 2.500H27.500V25.500H1.500zM1.500 7H27.500M1.500 13.500H27.500M1.500 19.500H27.500M10.500 7V25.500M19 7V25.500" stroke="#3b3a39" strokeWidth="2.200" />
        <path d="M1 3H28" stroke="#3b3a39" strokeWidth="4" />
        <circle cx="28" cy="26" r="12" fill="#f2c811" />
        <path d="M23.500 26L27 29.500 33 23" stroke="#252423" strokeWidth="3" />
      </svg>
      <span>{name}</span>
    </div>
  );
}

function FieldsPane() {
  return (
    <div className="flex flex-1 flex-col bg-[#f3f2f1] text-[#3b3a39]">
      <div className="flex h-[84px] items-start justify-between pr-[13px] pl-[17px]">
        <span className="text-[30px] leading-[66px] font-semibold tracking-[-0.3px] text-[#252423]">Fields</span>
        <span className="mt-[19px]">
          <ChevRight />
        </span>
      </div>
      <div className="ml-[9px] flex h-[54px] w-[344px] items-center rounded-[5px] border-2 border-[#7a7876] bg-white pl-[13px] text-[27.5px] tracking-[-0.9px] text-[#605e5c]">
        <svg className="-mt-[3px]" width="30" height="30" viewBox="0 0 30 30" fill="none" stroke="#4f5a70" strokeWidth="2">
          <circle cx="19" cy="10.500" r="9.500" />
          <path d="M12 17.500L1 29" />
        </svg>
        <span className="mt-[2px] ml-[13px]">Search</span>
      </div>
      <div className="mt-[8px] ml-[4px] h-[863px] w-[352px] rounded-[4px] border-6 border-[#fa3543] pt-[4px] shadow-[0_2px_6px_rgba(0,0,0,0.2)]">
        <TableNode name="Query1" />
        {fields.map((f) => (
          <FieldRow key={f[0]} f={f} />
        ))}
        <TableNode name="Sheet1" />
        {sheet.map((f) => (
          <FieldRow key={f[0]} f={f} />
        ))}
      </div>
    </div>
  );
}

export default function App() {
  return (
    <div className="relative flex h-[1634px] w-[3836px] overflow-hidden bg-white font-['Open_Sans','Noto_Sans',sans-serif]">
      <Rail />
      <div className="flex w-[2967px] shrink-0 flex-col pl-[36px]">
        <div className="flex h-[1618px]">
          <DotsV />
          <div className="flex w-[600px] shrink-0 flex-col">
            <TableVisual />
            <ErrorVisual />
          </div>
          <DonutVisual />
          <MapVisual />
          <div className="w-[12px] shrink-0" />
          <DotsV />
        </div>
        <div className="h-1 w-[2896px] bg-[repeating-linear-gradient(90deg,#3a3a3a_0px,#3a3a3a_4px,transparent_4px,transparent_8px)]" />
      </div>
      <FiltersStrip />
      <VisualizationsPane />
      <FieldsPane />
      <svg
        className="pointer-events-none absolute inset-0 drop-shadow-[0_3px_3px_rgba(0,0,0,0.2)]"
        width="3836"
        height="1634"
        viewBox="0 0 3836 1634"
        fill="#fa3543"
      >
        <path d="M556.500 1394L3452 930.500A2.500 2.500 0 0 1 3453.500 935.500L559 1409.600z" />
        <path d="M517 1408.400L552.500 1383 558 1421.500z" stroke="#fa3543" strokeWidth="4" strokeLinejoin="round" />
      </svg>
    </div>
  );
}
